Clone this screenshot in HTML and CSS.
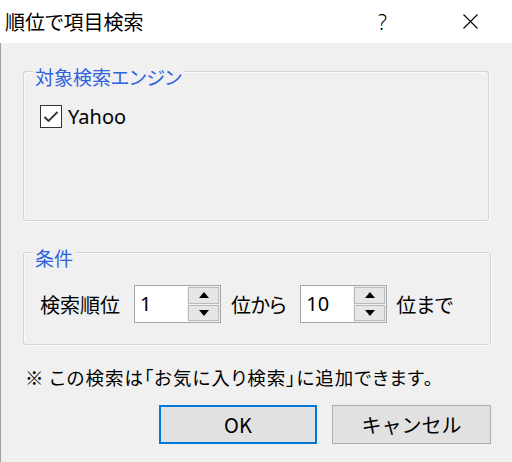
FILE: index.html
```html
<!DOCTYPE html>
<html lang="ja">
<head>
  <meta charset="UTF-8">
  <title>順位で項目検索</title>
  <link rel="stylesheet" href="styles.css">
</head>
<body>

<div class="titlebar">
  <span class="title">順位で項目検索</span>
  <span class="help">?</span>
  <span class="close">
    <svg width="15" height="15" viewBox="0 0 15 15"><path d="M0.5 0.5 L14.5 14.5 M14.5 0.5 L0.5 14.5" stroke="#000" stroke-width="1.1" fill="none"/></svg>
  </span>
</div>

<div class="dialog">
  <div class="group group-engine">
    <div class="legend">対象検索エンジン</div>
    <label class="check-row">
      <span class="checkbox">
        <svg width="16" height="14" viewBox="0 0 16 14"><path d="M1.5 7 L5.5 11 L14.5 2" stroke="#333" stroke-width="1.8" fill="none"/></svg>
      </span>
      <span>Yahoo</span>
    </label>
  </div>

  <div class="group group-cond">
    <div class="legend">条件</div>
    <div class="cond-row">
      <span class="lbl lbl-first">検索順位</span>
      <div class="spin">
        <span class="spin-value">1</span>
        <div class="spin-btns">
          <span class="spin-btn"><svg width="10" height="6" viewBox="0 0 10 6"><polygon points="0,6 10,6 5,0" fill="#000"/></svg></span>
          <span class="spin-btn"><svg width="10" height="6" viewBox="0 0 10 6"><polygon points="0,0 10,0 5,6" fill="#000"/></svg></span>
        </div>
      </div>
      <span class="lbl lbl-mid">位から</span>
      <div class="spin">
        <span class="spin-value">10</span>
        <div class="spin-btns">
          <span class="spin-btn"><svg width="10" height="6" viewBox="0 0 10 6"><polygon points="0,6 10,6 5,0" fill="#000"/></svg></span>
          <span class="spin-btn"><svg width="10" height="6" viewBox="0 0 10 6"><polygon points="0,0 10,0 5,6" fill="#000"/></svg></span>
        </div>
      </div>
      <span class="lbl lbl-last">位まで</span>
    </div>
  </div>

  <p class="note">※ この検索は「お気に入り検索」に追加できます。</p>

  <div class="actions">
    <button class="btn btn-default">OK</button>
    <button class="btn">キャンセル</button>
  </div>
</div>

</body>
</html>
```

FILE: styles.css
```css
body, html {
  margin: 0;
  padding: 0;
  height: 100%;
  overflow: hidden;
  font-family: "Noto Sans", "Noto Sans CJK JP", sans-serif;
  color: #000;
  background: #f0f0f0;
}

.titlebar {
  height: 43px;
  background: #fff;
  display: flex;
  align-items: center;
}

.title {
  font-family: "Noto Sans CJK JP", sans-serif;
  font-size: 20px;
  padding-left: 5px;
  flex: 1;
  font-feature-settings: "palt";
}

.help {
  font-size: 21px;
  width: 20px;
  margin-right: 65px;
  font-weight: 300;
}

.close {
  display: flex;
  margin-right: 34px;
}

.dialog {
  height: 419px;
  border-left: 1px solid #a0a0a0;
  box-sizing: border-box;
  display: flex;
  flex-direction: column;
  padding-left: 22px;
}

.group {
  border: 1px solid #d5d5c9;
  border-radius: 3px;
  box-shadow: inset 1px 1px 0 #fafafa, 1px 1px 0 #fafafa;
  box-sizing: border-box;
}

.group-engine {
  margin-top: 28px;
  width: 466px;
  height: 150px;
}

.group-cond {
  margin-top: 31px;
  width: 468px;
  height: 93px;
}

.legend {
  font-family: "Noto Sans CJK JP", sans-serif;
  font-feature-settings: "palt";
  color: #2f62dc;
  font-size: 19px;
  line-height: 24px;
  margin: -7px 0 0 9px;
  padding: 0 2px;
  background: #f0f0f0;
  width: fit-content;
}

.check-row {
  display: flex;
  align-items: center;
  margin: 14px 0 0 16px;
  font-size: 20px;
  gap: 6px;
}

.checkbox {
  width: 22px;
  height: 23px;
  box-sizing: border-box;
  border: 1px solid #333;
  background: #fff;
  display: flex;
  align-items: center;
  justify-content: center;
}

.cond-row {
  display: flex;
  align-items: center;
  margin: 15px 0 0 16px;
}

.lbl {
  font-family: "Noto Sans CJK JP", sans-serif;
  font-feature-settings: "palt";
  font-size: 20px;
}

.lbl-first {
  margin-right: 14px;
}

.lbl-mid {
  margin: 0 14px 0 10px;
  letter-spacing: -0.5px;
}

.lbl-last {
  margin-left: 9px;
}

.spin {
  display: flex;
  height: 38px;
  border: 1px solid #a5a5a5;
  background: #fff;
  box-sizing: border-box;
}

.spin-value {
  width: 47px;
  padding-left: 5px;
  font-size: 20px;
  line-height: 36px;
}

.spin-btns {
  display: flex;
  flex-direction: column;
  gap: 1px;
  padding: 1px;
  background: #f0f0f0;
}

.spin-btn {
  width: 31px;
  flex: 1;
  box-sizing: border-box;
  border: 1px solid #b9b9b9;
  background: #e6e6e6;
  display: flex;
  align-items: center;
  justify-content: center;
}

.note {
  font-family: "Noto Sans CJK JP", sans-serif;
  font-feature-settings: "palt";
  font-size: 18.5px;
  letter-spacing: 1px;
  margin: 19px 0 0 2px;
  line-height: 26px;
}

.actions {
  display: flex;
  gap: 15px;
  margin: 15px 0 0 136px;
}

.btn {
  font-family: "Noto Sans CJK JP", sans-serif;
  font-size: 20px;
  height: 39px;
  background: #e1e1e1;
  border: 1px solid #adadad;
  width: 159px;
  padding: 0;
  color: #000;
}

.btn-default {
  width: 158px;
  border: 2px solid #0078d7;
}
```
